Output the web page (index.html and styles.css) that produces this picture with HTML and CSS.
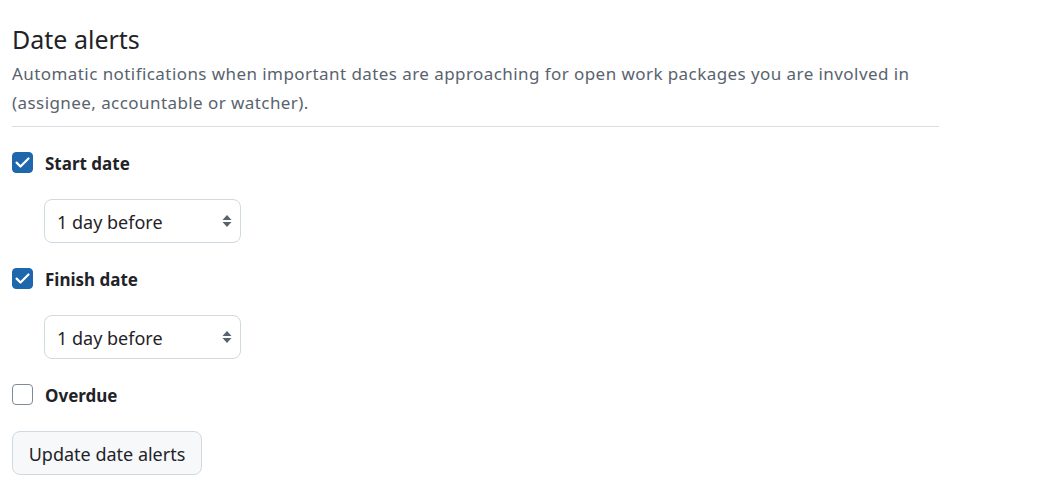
FILE: index.html
```html
<!DOCTYPE html>
<html lang="en">
<head>
<meta charset="utf-8">
<title>Date alerts</title>
<link rel="stylesheet" href="styles.css">
</head>
<body>
<main class="page">
  <section class="section">
    <h2 class="title">Date alerts</h2>
    <p class="desc">Automatic notifications when important dates are approaching for open work packages you are involved in (assignee, accountable or watcher).</p>
    <hr class="divider">
    <form class="form">
      <label class="check-row">
        <span class="box checked"><svg viewBox="0 0 21 21" width="21" height="21"><path d="M4.6 10.6l3.9 3.9 8-8" fill="none" stroke="#fff" stroke-width="2.2" stroke-linecap="round" stroke-linejoin="round"/></svg></span>
        <span class="check-label">Start date</span>
      </label>
      <div class="select-row">
        <div class="select">
          <span class="select-text">1 day before</span>
          <svg class="caret" viewBox="0 0 10 16" width="10" height="16"><path d="M5 2l4.5 5h-9z M5 14l4.5-5h-9z" fill="#59636e"/></svg>
        </div>
      </div>
      <label class="check-row">
        <span class="box checked"><svg viewBox="0 0 21 21" width="21" height="21"><path d="M4.6 10.6l3.9 3.9 8-8" fill="none" stroke="#fff" stroke-width="2.2" stroke-linecap="round" stroke-linejoin="round"/></svg></span>
        <span class="check-label">Finish date</span>
      </label>
      <div class="select-row">
        <div class="select">
          <span class="select-text">1 day before</span>
          <svg class="caret" viewBox="0 0 10 16" width="10" height="16"><path d="M5 2l4.5 5h-9z M5 14l4.5-5h-9z" fill="#59636e"/></svg>
        </div>
      </div>
      <label class="check-row">
        <span class="box"></span>
        <span class="check-label">Overdue</span>
      </label>
      <div class="actions">
        <button type="button" class="btn"><span class="btn-text">Update date alerts</span></button>
      </div>
    </form>
  </section>
</main>
</body>
</html>
```
FILE: styles.css
```css
* { box-sizing: border-box; }
html, body { margin: 0; padding: 0; background: #fff; }
body {
  font-family: "Noto Sans", "Open Sans", sans-serif;
  color: #1f2328;
}
.page { padding: 23px 12px 0 12px; }
.section { width: 927px; }
.title {
  margin: 0;
  font-size: 25px;
  font-weight: 400;
  line-height: 32px;
  color: #1f2328;
}
.desc {
  margin: 4px 0 0 0;
  font-size: 17px;
  letter-spacing: 0.43px;
  line-height: 29px;
  color: #59636e;
}
.divider {
  margin: 9px 0 0 0;
  border: 0;
  border-top: 1px solid #d8dee4;
  height: 0;
}
.form {
  display: flex;
  flex-direction: column;
  padding-top: 24px;
}
.check-row {
  display: flex;
  align-items: center;
  gap: 12px;
  height: 22px;
}
.box {
  width: 21px;
  height: 21px;
  border-radius: 4px;
  border: 1px solid #818b98;
  background: #fff;
  display: flex;
  align-items: center;
  justify-content: center;
}
.box.checked {
  background: #1f67ad;
  border-color: #1f67ad;
}
.box svg { display: block; flex: none; }
.check-label {
  font-size: 17px;
  font-weight: 700;
  color: #1f2328;
  padding-top: 3px;
}
.select-row {
  padding: 26px 0 24px 32px;
}
.select {
  width: 197px;
  height: 44px;
  border: 1px solid #d1d9e0;
  border-radius: 8px;
  display: flex;
  align-items: center;
  justify-content: space-between;
  padding: 0 8px 0 12px;
  font-size: 18px;
  color: #1f2328;
}
.select-text { padding-top: 2px; }
.caret { display: block; }
.actions { padding-top: 26px; }
.btn {
  font-family: inherit;
  font-size: 18px;
  color: #1f2328;
  background: #f6f8fa;
  border: 1px solid #d1d9e0;
  border-radius: 8px;
  height: 44px;
  width: 190px;
  padding: 0;
}
.btn-text { display: inline-block; padding-top: 2px; }
```
